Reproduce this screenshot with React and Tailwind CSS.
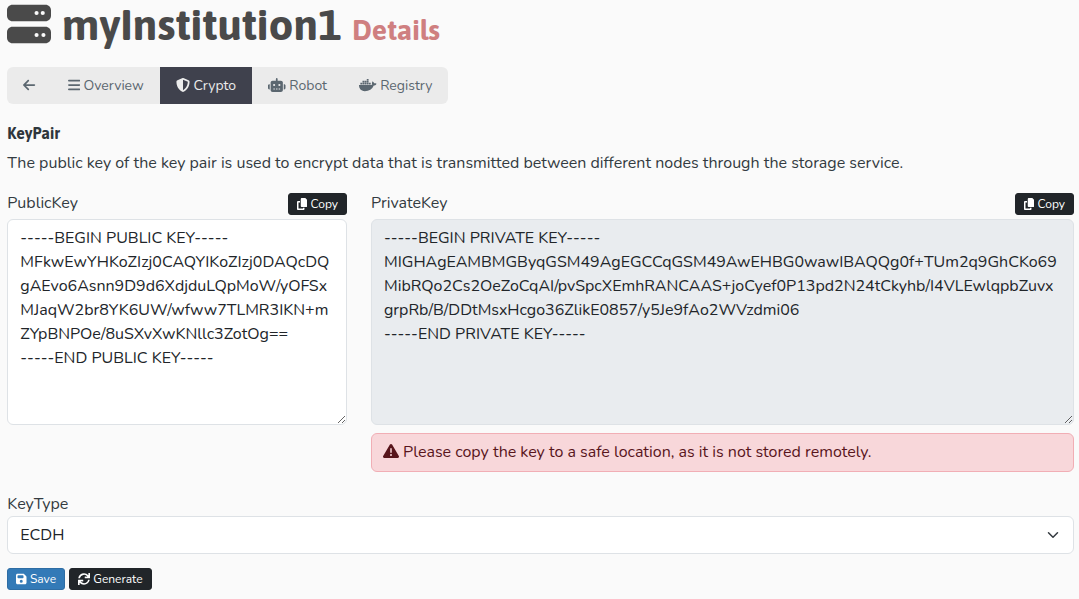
import {
  FaServer, FaArrowLeft, FaBars, FaShieldHalved, FaRobot, FaDocker,
  FaCopy, FaTriangleExclamation, FaFloppyDisk,
} from 'react-icons/fa6';
import { FaSync } from 'react-icons/fa';

const PUBLIC_KEY = `-----BEGIN PUBLIC KEY-----
MFkwEwYHKoZIzj0CAQYIKoZIzj0DAQcDQ
gAEvo6Asnn9D9d6XdjduLQpMoW/yOFSx
MJaqW2br8YK6UW/wfww7TLMR3IKN+m
ZYpBNPOe/8uSXvXwKNllc3ZotOg==
-----END PUBLIC KEY-----`;

const PRIVATE_KEY = `-----BEGIN PRIVATE KEY-----
MIGHAgEAMBMGByqGSM49AgEGCCqGSM49AwEHBG0wawIBAQQg0f+TUm2q9GhCKo69
MibRQo2Cs2OeZoCqAI/pvSpcXEmhRANCAAS+joCyef0P13pd2N24tCkyhb/I4VLEwlqpbZuvx
grpRb/B/DDtMsxHcgo36ZlikE0857/y5Je9fAo2WVzdmi06
-----END PRIVATE KEY-----`;

const ICON = {
  narrow: 'inline-block h-[1em] w-[0.875em] align-[-0.125em]',
  square: 'inline-block h-[1em] w-[1em] align-[-0.125em]',
  wide: 'inline-block h-[1em] w-[1.25em] align-[-0.125em]',
};

const TABS = [
  { icon: FaArrowLeft, size: ICON.narrow },
  { icon: FaBars, size: ICON.narrow, label: 'Overview' },
  { icon: FaShieldHalved, size: ICON.square, label: 'Crypto', active: true },
  { icon: FaRobot, size: ICON.wide, label: 'Robot' },
  { icon: FaDocker, size: ICON.wide, label: 'Registry' },
];

function Tab({ icon: Icon, size, label, active }) {
  return (
    <a className={active ? 'bg-[#3f414d] px-4 py-2 text-[#ececec]' : 'px-4 py-2 text-[#5b6770]'}>
      <Icon className={size} />{label && ` ${label}`}
    </a>
  );
}

function Button({ icon: Icon, size = ICON.square, color = 'border-[#212529] bg-[#212529]', children }) {
  return (
    <button className={`h-[22px] rounded-[3px] border px-2 text-[12px] leading-[18px] whitespace-nowrap text-white ${color}`}>
      <Icon className={size} /> {children}
    </button>
  );
}

function KeyField({ label, value, className }) {
  return (
    <div>
      <div className="flex h-[26px] items-start justify-between">
        <label>{label}</label>
        <div className="flex pt-[2px]"><Button icon={FaCopy} size={ICON.narrow}>Copy</Button></div>
      </div>
      <textarea
        readOnly
        spellCheck={false}
        value={value}
        className={`mt-[2px] block h-[206px] w-full resize rounded-md border border-[#dee2e6] px-3 py-1.5 leading-6 text-[#212529] ${className}`}
      />
    </div>
  );
}

export default function App() {
  return (
    <div className="h-[599px] w-full overflow-hidden bg-[#fafafa] pr-[5px] pl-[7.33px] font-['Nunito','Open_Sans',sans-serif] text-[16px] leading-6 text-[#333b41]">
      <h1 className="flex h-[50px] items-baseline font-['Asap','Lato',sans-serif] text-[44px] leading-[48px] font-bold whitespace-pre text-[#4a4a4a]">
        <span><FaServer className={ICON.square} /> myInstitution1 </span>
        <small className="text-[28.4px] text-[#cf7f80]">Details</small>
      </h1>

      <nav className="mt-[17px] flex h-[37px] w-fit overflow-hidden rounded-md bg-[#ebebeb] text-[14px] leading-[21px] whitespace-nowrap">
        {TABS.map((tab, i) => <Tab key={i} {...tab} />)}
      </nav>

      <h6 className="mt-[20px] font-['Asap','Lato',sans-serif] leading-[19px] font-bold text-[#2f363c]">KeyPair</h6>
      <p className="mt-2 whitespace-nowrap">
        The public key of the key pair is used to encrypt data that is transmitted between different nodes through the storage service.
      </p>

      <div className="mt-4 grid grid-cols-[339.67px_1fr] gap-6">
        <KeyField label="PublicKey" value={PUBLIC_KEY} className="bg-white" />
        <div>
          <KeyField label="PrivateKey" value={PRIVATE_KEY} className="bg-[#e9ecef]" />
          <div className="mt-2 flex h-[39px] items-start rounded-md border border-[#f1aeb5] bg-[#f8d7da] px-[11px] pt-[6px] text-[#58151c]">
            <span><FaTriangleExclamation className={ICON.square} /> Please copy the key to a safe location, as it is not stored remotely.</span>
          </div>
        </div>
      </div>

      <label className="mt-5 block">KeyType</label>
      <div className="flex h-[38px] items-center justify-between rounded-md border border-[#dee2e6] bg-white pr-[14px] pl-3 text-[#212529]">
        <span>ECDH</span>
        <svg viewBox="0 0 16 16" className="h-3 w-3" fill="none" stroke="#343a40" strokeWidth="2" strokeLinecap="round" strokeLinejoin="round">
          <path d="m2 5 6 6 6-6" />
        </svg>
      </div>

      <div className="mt-[14px] flex gap-1">
        <Button icon={FaFloppyDisk} size={ICON.narrow} color="border-[#2e6da4] bg-[#337ab7]">Save</Button>
        <Button icon={FaSync}>Generate</Button>
      </div>
    </div>
  );
}
